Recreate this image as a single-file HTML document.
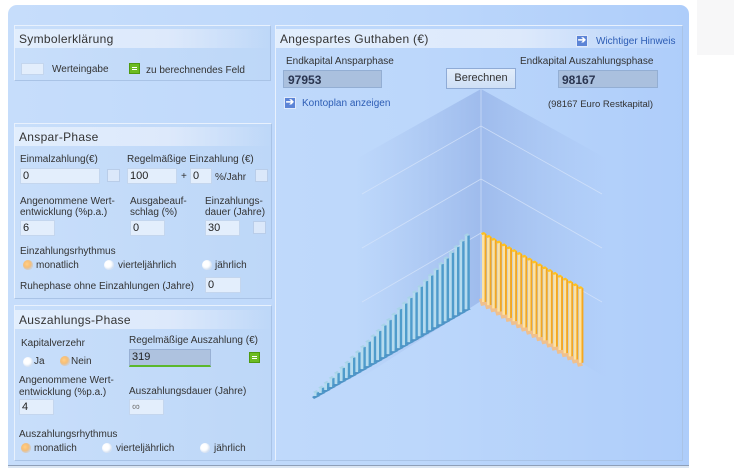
<!DOCTYPE html>
<html><head><meta charset="utf-8"><style>
*{margin:0;padding:0;box-sizing:border-box}
body{width:734px;height:468px;background:#fff;position:relative;overflow:hidden;font-family:"Liberation Sans",sans-serif;font-size:10px;color:#333}
.a{position:absolute}
#outer{left:8px;top:5px;width:681px;height:463px;border-radius:9px 9px 0 0;background:linear-gradient(90deg,#c6ddfb,#bcd7fb 60%,#aecdfa)}
.panel{position:absolute;border:1px solid #e8f1fd;border-right-color:#a9c3e6;border-bottom-color:#a9c3e6;background:linear-gradient(90deg,#c8defa,#bdd7f8)}
.h{position:absolute;left:0;top:3px;height:19px;width:100%;background:linear-gradient(90deg,#e2eefd,#dde9fb 60%,rgba(200,222,250,0));font-size:12px;color:#333;padding:3px 0 0 4px;letter-spacing:.3px}
.in{position:absolute;height:16px;background:#e3eefc;border:1px solid #c4d6ee;font-size:11px;padding:1px 2px;color:#222}
.ck{position:absolute;width:13px;height:13px;background:#dbe8fa;border:1px solid #b9cde9}
.rd{position:absolute;width:10px;height:10px;border-radius:50%;background:#fff;box-shadow:inset -1px -1px 2px #c8d8ee}
.rd.on{background:radial-gradient(circle at 40% 40%,#ffd08a,#f0a24a)}
.t{position:absolute;white-space:nowrap;font-size:10px;color:#333}
.out{position:absolute;height:18px;background:#aac0de;border:1px solid #93aed3;font-size:12px;font-weight:bold;color:#2a3550;padding:2px 10px}
.eq{position:absolute;width:11px;height:11px;background:#6cbb22;border:1px solid #4e9a10}
.eq:before,.eq:after{content:"";position:absolute;left:2px;width:5px;height:1px;background:#fff}
.eq:before{top:3px}.eq:after{top:5px}
.arr{position:absolute;width:12px;height:12px;background:#5c84d6;border:1px solid #dfe9fa;color:#fff;font-size:10px;line-height:10px;text-align:center;font-weight:bold}
.lnk{position:absolute;color:#2c5cb4;font-size:10px;white-space:nowrap}
</style></head><body>
<div class="a" style="left:697px;top:0;width:37px;height:55px;background:#f7f7f8"></div>
<div id="outer" class="a"></div>

<div class="panel" style="left:14px;top:25px;width:257px;height:56px">
 <div class="h">Symbolerklärung</div>
 <div class="in" style="left:6px;top:37px;width:23px;height:12px"></div>
 <div class="t" style="left:37px;top:38px">Werteingabe</div>
 <div class="eq" style="left:114px;top:37px"></div>
 <div class="t" style="left:131px;top:39px">zu berechnendes Feld</div>
</div>

<div class="panel" style="left:14px;top:123px;width:258px;height:176px">
 <div class="h">Anspar-Phase</div>
 <div class="t" style="left:5px;top:30px">Einmalzahlung(€)</div>
 <div class="t" style="left:112px;top:30px">Regelmäßige Einzahlung (€)</div>
 <div class="in" style="left:5px;top:44px;width:80px">0</div>
 <div class="ck" style="left:92px;top:45px"></div>
 <div class="in" style="left:112px;top:44px;width:50px">100</div>
 <div class="t" style="left:166px;top:47px">+</div>
 <div class="in" style="left:175px;top:44px;width:22px">0</div>
 <div class="t" style="left:200px;top:48px">%/Jahr</div>
 <div class="ck" style="left:240px;top:45px"></div>
 <div class="t" style="left:5px;top:72px;line-height:11px">Angenommene Wert-<br>entwicklung (%p.a.)</div>
 <div class="t" style="left:115px;top:72px;line-height:11px">Ausgabeauf-<br>schlag (%)</div>
 <div class="t" style="left:190px;top:72px;line-height:11px">Einzahlungs-<br>dauer (Jahre)</div>
 <div class="in" style="left:5px;top:96px;width:35px">6</div>
 <div class="in" style="left:115px;top:96px;width:35px">0</div>
 <div class="in" style="left:190px;top:96px;width:35px">30</div>
 <div class="ck" style="left:238px;top:97px"></div>
 <div class="t" style="left:5px;top:122px">Einzahlungsrhythmus</div>
 <div class="rd on" style="left:8px;top:136px"></div><div class="t" style="left:21px;top:136px">monatlich</div>
 <div class="rd" style="left:89px;top:136px"></div><div class="t" style="left:103px;top:136px">vierteljährlich</div>
 <div class="rd" style="left:187px;top:136px"></div><div class="t" style="left:200px;top:136px">jährlich</div>
 <div class="t" style="left:5px;top:157px">Ruhephase ohne Einzahlungen (Jahre)</div>
 <div class="in" style="left:190px;top:153px;width:36px">0</div>
</div>

<div class="panel" style="left:14px;top:305px;width:258px;height:156px">
 <div class="h" style="top:4px">Auszahlungs-Phase</div>
 <div class="t" style="left:6px;top:32px">Kapitalverzehr</div>
 <div class="t" style="left:114px;top:29px">Regelmäßige Auszahlung (€)</div>
 <div class="rd" style="left:8px;top:51px"></div><div class="t" style="left:19px;top:50px">Ja</div>
 <div class="rd on" style="left:45px;top:50px"></div><div class="t" style="left:56px;top:50px">Nein</div>
 <div class="in" style="left:114px;top:43px;width:82px;height:18px;background:#aec2df;border-color:#98b0d4;border-bottom:2px solid #5cb82a;font-size:11px">319</div>
 <div class="eq" style="left:234px;top:46px"></div>
 <div class="t" style="left:4px;top:69px;line-height:12px">Angenommene Wert-<br>entwicklung (%p.a.)</div>
 <div class="t" style="left:114px;top:80px">Auszahlungsdauer (Jahre)</div>
 <div class="in" style="left:4px;top:93px;width:35px">4</div>
 <div class="in" style="left:114px;top:93px;width:35px;color:#777">∞</div>
 <div class="t" style="left:4px;top:123px">Auszahlungsrhythmus</div>
 <div class="rd on" style="left:6px;top:137px"></div><div class="t" style="left:19px;top:137px">monatlich</div>
 <div class="rd" style="left:87px;top:137px"></div><div class="t" style="left:101px;top:137px">vierteljährlich</div>
 <div class="rd" style="left:185px;top:137px"></div><div class="t" style="left:199px;top:137px">jährlich</div>
</div>

<div class="a" style="left:275px;top:25px;width:408px;height:436px;border:1px solid #e8f1fd;border-right-color:#a9c3e6;border-bottom-color:#a9c3e6">
 <svg class="a" style="left:0;top:0" width="406" height="434" viewBox="275 25 406 434">
  <defs>
   <linearGradient id="lw" x1="0" x2="1"><stop offset="0" stop-color="#a4c0ee" stop-opacity="0"/><stop offset="1" stop-color="#9ab7ea" stop-opacity="0.85"/></linearGradient>
   <linearGradient id="rw" x1="1" x2="0"><stop offset="0" stop-color="#a4c0ee" stop-opacity="0"/><stop offset="1" stop-color="#9ab7ea" stop-opacity="0.85"/></linearGradient>
  </defs>
  <polygon points="480,88 355,158 355,380 480,300" fill="url(#lw)"/>
  <polygon points="480,88 610,160 610,380 480,300" fill="url(#rw)"/>
  <g stroke="#d6e4fa" stroke-width="0.8" fill="none" opacity="0.8">
   <line x1="480" y1="88" x2="480" y2="300"/>
   <line x1="480" y1="125" x2="361" y2="193"/><line x1="480" y1="125" x2="601" y2="193"/>
   <line x1="480" y1="178" x2="361" y2="247"/><line x1="480" y1="178" x2="601" y2="247"/>
   <line x1="480" y1="232" x2="361" y2="301"/><line x1="480" y1="232" x2="601" y2="301"/>
  </g>
  <g id="bars"></g>
 </svg>
 <div class="h" style="font-size:12px">Angespartes Guthaben (€)</div>
 <div class="arr" style="left:300px;top:9px">➔</div>
 <div class="lnk" style="left:320px;top:10px">Wichtiger Hinweis</div>
 <div class="t" style="left:10px;top:30px">Endkapital Ansparphase</div>
 <div class="t" style="left:244px;top:30px">Endkapital Auszahlungsphase</div>
 <div class="out" style="left:7px;top:44px;width:99px;padding-left:4px">97953</div>
 <div class="out" style="left:282px;top:44px;width:100px;padding-left:3px">98167</div>
 <div class="a" style="left:170px;top:42px;width:70px;height:21px;background:linear-gradient(#e2edfb,#cfdff5);border:1px solid #8fabd6;font-size:11px;text-align:center;line-height:19px;color:#333">Berechnen</div>
 <div class="arr" style="left:8px;top:71px">➔</div>
 <div class="lnk" style="left:26px;top:72px">Kontoplan anzeigen</div>
 <div class="t" style="left:272px;top:73px;font-size:9.5px">(98167 Euro Restkapital)</div>
</div>
<div class="a" style="left:8px;top:465px;width:681px;height:3px;border-top:1px solid #8e9fb8;background:#dbe6f3"></div>
<script>
var g=document.getElementById('bars'),s='';
for(var i=0;i<30;i++){var x=313+i*5.2,by=395-(x-313)*0.575,h=4+Math.pow(i/29,1.15)*70,ty=by-h;
 s+='<polygon points="'+(x-2)+','+(by+1)+' '+(x+3)+','+(by-2)+' '+(x+6)+','+(by)+' '+x+','+(by+3)+'" fill="#4e93c6"/>';
 s+='<rect x="'+x+'" y="'+ty+'" width="2.6" height="'+h+'" fill="#b5dbee"/><rect x="'+(x+2.6)+'" y="'+ty+'" width="2.4" height="'+h+'" fill="#4f9ccb"/>';
 s+='<polygon points="'+(x-1)+','+ty+' '+(x+2.5)+','+(ty-2)+' '+(x+5)+','+ty+' '+(x+1)+','+(ty+1)+'" fill="#a9d3e8"/>';}
for(var j=0;j<20;j++){var x=481+j*5.1,by=301+j*3.2,ty=233+j*2.85;
 s+='<polygon points="'+(x-3)+','+(by-3)+' '+(x+2)+','+(by-4)+' '+(x+4)+','+(by+3)+' '+(x-1)+','+(by+4)+'" fill="#efc08e"/>';
 s+='<rect x="'+x+'" y="'+ty+'" width="2.6" height="'+(by-ty)+'" fill="#ffe3a0"/><rect x="'+(x+2.6)+'" y="'+ty+'" width="1.9" height="'+(by-ty)+'" fill="#f6a820"/>';
 s+='<polygon points="'+(x-1)+','+(ty-1)+' '+(x+2)+','+(ty-2)+' '+(x+4.5)+','+ty+' '+x+','+(ty+1)+'" fill="#ffc21e"/>';}
g.innerHTML=s;
</script>
</body></html>
